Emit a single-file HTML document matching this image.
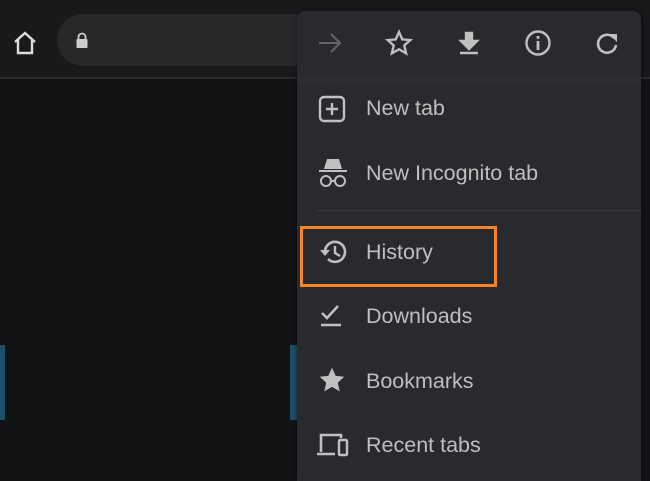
<!DOCTYPE html>
<html><head><style>
body{margin:0;width:650px;height:475px;overflow:hidden;background:#121315;font-family:"Liberation Sans",sans-serif;position:relative}
.top{position:absolute;left:0;top:0;width:650px;height:77px;background:#18191b;border-bottom:2px solid #2a2b2d}
.url{position:absolute;left:57px;top:14px;width:300px;height:52px;border-radius:26px;background:#27282a}
.menu{position:absolute;left:297px;top:11px;width:344px;height:470px;background:#282a2d;border-radius:8px 8px 0 0;box-shadow:0 0 6px rgba(0,0,0,.5)}
.item{position:absolute;left:69px;font-size:21.5px;color:#bfbfbf}
svg{position:absolute}
.box{position:absolute;left:300px;top:226px;width:191px;height:55px;border:3px solid #f7842a}
</style></head><body>
<div class="top"></div>
<div class="url"></div>
<svg style="left:12px;top:30px" width="26" height="26" viewBox="0 0 26 26"><path d="M3 12 L13 3 L23 12 M6 10 V23 H20 V10" fill="none" stroke="#ddd" stroke-width="2.4"/></svg>
<svg style="left:75px;top:32px" width="14" height="16" viewBox="0 0 14 16"><path d="M3.5 7V5a3.5 3.5 0 0 1 7 0v2" fill="none" stroke="#ccc" stroke-width="1.8"/><rect x="1.5" y="7" width="11" height="9" rx="1" fill="#ccc"/></svg>
<div style="position:absolute;left:0;top:345px;width:5px;height:75px;background:#1f5068"></div>
<div style="position:absolute;left:290px;top:345px;width:7px;height:75px;background:#1f5068"></div>
<div class="menu">
<svg style="left:19px;top:20px" width="28" height="24" viewBox="0 0 28 24"><path d="M3 12H24M15 3L24 12L15 21" fill="none" stroke="#666" stroke-width="2"/></svg>
<svg style="left:88px;top:18px" width="28" height="28" viewBox="0 0 24 24"><path d="M12 2.5l2.8 6.4 6.9.6-5.2 4.6 1.6 6.8L12 17.3l-6.1 3.6 1.6-6.8L2.3 9.5l6.9-.6z" fill="none" stroke="#c0c0c0" stroke-width="2"/></svg>
<svg style="left:160px;top:20px" width="24" height="26" viewBox="0 0 24 26"><path d="M9 2h6v8h5l-8 8-8-8h5z M3 22h18" fill="#c0c0c0" stroke="#c0c0c0" stroke-width="2.4"/></svg>
<svg style="left:227px;top:18px" width="28" height="28" viewBox="0 0 28 28"><circle cx="14" cy="14" r="11.5" fill="none" stroke="#c0c0c0" stroke-width="2.4"/><rect x="12.6" y="12" width="2.8" height="9" fill="#c0c0c0"/><rect x="12.6" y="7" width="2.8" height="2.8" fill="#c0c0c0"/></svg>
<svg style="left:297px;top:19px" width="26" height="26" viewBox="0 0 26 26"><path d="M20 8A9 9 0 1 0 22 15" fill="none" stroke="#c0c0c0" stroke-width="2.6"/><path d="M15 4H23V12Z" fill="#c0c0c0"/></svg>
<div style="position:absolute;left:0;top:66px;width:344px;height:12px;background:linear-gradient(#2d2f32,#282a2d)"></div>
<svg style="left:21px;top:84px" width="28" height="28" viewBox="0 0 28 28"><rect x="2" y="2" width="24" height="24" rx="4" fill="none" stroke="#c0c0c0" stroke-width="2.4"/><path d="M14 8v12M8 14h12" stroke="#c0c0c0" stroke-width="2.4"/></svg>
<div class="item" style="top:85px">New tab</div>
<svg style="left:21px;top:146px" width="30" height="32" viewBox="0 0 30 32"><path d="M9 2h12l3 10H6z" fill="#c0c0c0"/><rect x="1" y="13" width="28" height="2" fill="#c0c0c0"/><circle cx="8" cy="24" r="5" fill="none" stroke="#c0c0c0" stroke-width="2"/><circle cx="22" cy="24" r="5" fill="none" stroke="#c0c0c0" stroke-width="2"/><path d="M13 24h4" stroke="#c0c0c0" stroke-width="2"/></svg>
<div class="item" style="top:150px">New Incognito tab</div>
<div style="position:absolute;left:20px;top:199px;width:324px;height:1px;background:#3a3c3f"></div>
<svg style="left:21px;top:227px" width="30" height="28" viewBox="0 0 30 28"><path d="M7 14A10 10 0 1 1 10 21" fill="none" stroke="#c0c0c0" stroke-width="2.6"/><path d="M2 12L7 18L12 12Z" fill="#c0c0c0"/><path d="M17 8v7l5 3" fill="none" stroke="#c0c0c0" stroke-width="2.4"/></svg>
<div class="item" style="top:229px">History</div>
<svg style="left:22px;top:292px" width="26" height="26" viewBox="0 0 26 26"><path d="M3 10l5 5L19 3" fill="none" stroke="#c0c0c0" stroke-width="2.6"/><path d="M2 22h20" stroke="#c0c0c0" stroke-width="2.6"/></svg>
<div class="item" style="top:293px">Downloads</div>
<svg style="left:21px;top:355px" width="28" height="28" viewBox="0 0 24 24"><path d="M12 1.5l3.2 7 7.3.7-5.5 5 1.6 7.6L12 17.9l-6.6 3.9L7 14.2 1.5 9.2l7.3-.7z" fill="#c0c0c0"/></svg>
<div class="item" style="top:358px">Bookmarks</div>
<svg style="left:19px;top:421px" width="34" height="26" viewBox="0 0 34 26"><path d="M5 20V3h20v3" fill="none" stroke="#c0c0c0" stroke-width="2.6"/><path d="M1 22h18" stroke="#c0c0c0" stroke-width="2.6"/><rect x="23" y="8" width="8" height="15" rx="1" fill="none" stroke="#c0c0c0" stroke-width="2.4"/></svg>
<div class="item" style="top:422px">Recent tabs</div>
</div>
<div class="box"></div>
</body></html>
